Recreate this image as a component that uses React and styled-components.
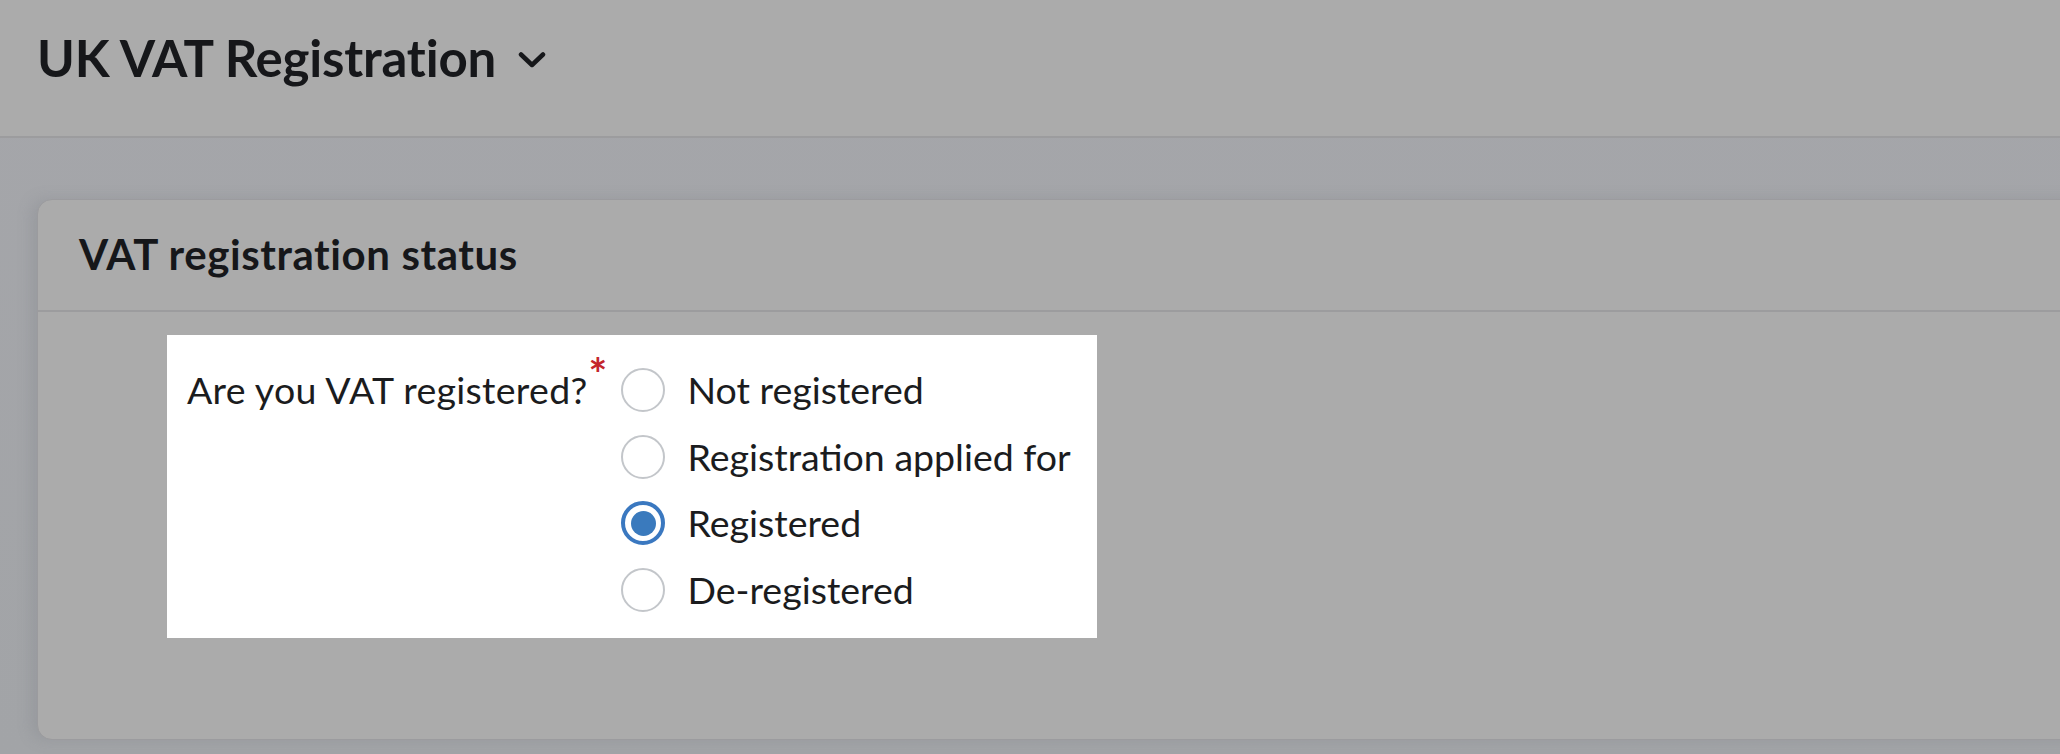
import React from "react";
import styled, { createGlobalStyle } from "styled-components";

const Global = createGlobalStyle`
  html, body { margin: 0; padding: 0; }
  body {
    background: #a4a6a9;
    font-family: Lato, "Open Sans", Arial, sans-serif;
    color: #1b1c1e;
    overflow: hidden;
  }
`;

const Page = styled.div`
  width: 2060px;
  height: 754px;
  display: flex;
  flex-direction: column;
  background: linear-gradient(180deg, #a5a6aa 0%, #a2a4a7 100%);
`;

const TopBar = styled.header`
  height: 138px;
  box-sizing: border-box;
  background: #ababab;
  border-bottom: 2px solid #9c9c9e;
  padding: 27px 0 0 37px;
  display: flex;
  align-items: flex-start;
  gap: 22px;
`;

const Title = styled.h1`
  margin: 0;
  font-size: 51px;
  line-height: 1.2;
  font-weight: 700;
  letter-spacing: -0.2px;
  color: #16171a;
`;

const Chevron = styled.svg`
  width: 28px;
  height: 18px;
  margin-top: 24px;
`;

const Content = styled.main`
  flex: 1;
  padding: 61px 0 0 37px;
`;

const Card = styled.section`
  width: 2100px;
  height: 541px;
  box-sizing: border-box;
  background: #ababab;
  border: 1.5px solid #9b9b9e;
  border-radius: 15px;
  box-shadow: -6px 0 14px rgba(120, 124, 130, 0.25);
  display: flex;
  flex-direction: column;
`;

const CardHeader = styled.div`
  height: 112px;
  box-sizing: border-box;
  padding: 29px 0 0 41px;
  border-bottom: 2px solid #9c9c9e;
`;

const CardTitle = styled.h2`
  margin: 0;
  font-size: 42px;
  line-height: 1.2;
  font-weight: 700;
  letter-spacing: 0.6px;
  color: #16171a;
`;

const CardBody = styled.div`
  padding: 23px 0 0 129px;
`;

const Spotlight = styled.div`
  width: 930px;
  height: 303px;
  box-sizing: border-box;
  background: #ffffff;
  padding: 33px 0 0 20px;
  display: flex;
  align-items: flex-start;
`;

const Question = styled.div`
  font-size: 37.5px;
  line-height: 44px;
  font-weight: 400;
  letter-spacing: 0.3px;
  color: #1b1c1e;
  white-space: nowrap;
  width: 434px;
  flex-shrink: 0;
`;

const Required = styled.span`
  color: #c4262c;
  font-size: 44px;
  line-height: 0;
  font-weight: 700;
  position: relative;
  top: -14px;
  margin-left: 1px;
`;

const Options = styled.div`
  display: flex;
  flex-direction: column;
  gap: 22.7px;
`;

const Option = styled.label`
  display: flex;
  align-items: center;
  gap: 22.5px;
  font-size: 37.5px;
  line-height: 44px;
  color: #1b1c1e;
  white-space: nowrap;
`;

const Radio = styled.span`
  width: 44px;
  height: 44px;
  box-sizing: border-box;
  border-radius: 50%;
  flex-shrink: 0;
  display: flex;
  align-items: center;
  justify-content: center;
  background: #fff;
  border: ${(p) => (p.$checked ? "4.5px solid #3a78c0" : "2px solid #c3c6ca")};
`;

const Dot = styled.span`
  width: 25px;
  height: 25px;
  border-radius: 50%;
  background: #3a7abd;
`;

const options = [
  { label: "Not registered", checked: false },
  { label: "Registration applied for", checked: false },
  { label: "Registered", checked: true },
  { label: "De-registered", checked: false },
];

export default function App() {
  return (
    <>
      <Global />
      <Page>
        <TopBar>
          <Title>UK VAT Registration</Title>
          <Chevron viewBox="0 0 28 18" fill="none">
            <path
              d="M3 3.5 L14 14 L25 3.5"
              stroke="#16171a"
              strokeWidth="4.5"
              strokeLinecap="round"
              strokeLinejoin="round"
            />
          </Chevron>
        </TopBar>
        <Content>
          <Card>
            <CardHeader>
              <CardTitle>VAT registration status</CardTitle>
            </CardHeader>
            <CardBody>
              <Spotlight>
                <Question>
                  Are you VAT registered?<Required>*</Required>
                </Question>
                <Options>
                  {options.map((o) => (
                    <Option key={o.label}>
                      <Radio $checked={o.checked}>{o.checked && <Dot />}</Radio>
                      {o.label}
                    </Option>
                  ))}
                </Options>
              </Spotlight>
            </CardBody>
          </Card>
        </Content>
      </Page>
    </>
  );
}
